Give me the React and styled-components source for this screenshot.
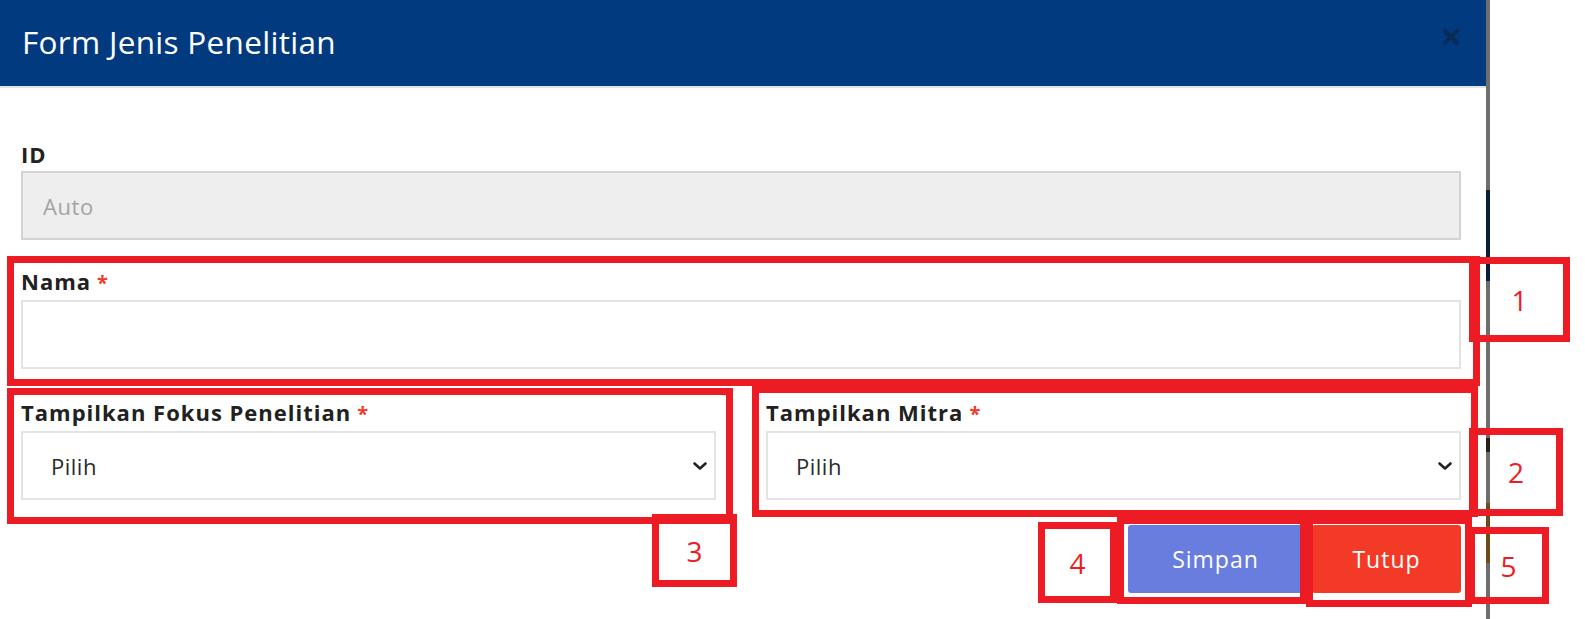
import React from "react";
import styled, { createGlobalStyle } from "styled-components";

const GlobalStyle = createGlobalStyle`
  html, body {
    margin: 0;
    padding: 0;
    background: #ffffff;
  }
  body {
    font-family: "Open Sans", "Noto Sans", sans-serif;
  }
`;

const Page = styled.div`
  position: relative;
  width: 1585px;
  height: 619px;
  overflow: hidden;
  display: flex;
  background: #ffffff;
`;

const Modal = styled.div`
  width: 1486px;
  flex-shrink: 0;
  display: flex;
  flex-direction: column;
  background: #ffffff;
`;

/* the dark page behind the modal peeks through as a thin strip */
const Backdrop = styled.div`
  width: 4px;
  flex-shrink: 0;
  background: linear-gradient(
    to bottom,
    #6d6d6d 0px,
    #6d6d6d 190px,
    #0b1c3d 190px,
    #0b1c3d 281px,
    #6d6d6d 281px,
    #6d6d6d 438px,
    #2a2016 438px,
    #2a2016 452px,
    #6d6d6d 452px,
    #6d6d6d 503px,
    #6b4a1c 503px,
    #6b4a1c 563px,
    #6d6d6d 563px
  );
`;

const Header = styled.div`
  height: 86px;
  background: #023a80;
  border-bottom: 2px solid #e4e4e4;
  display: flex;
  align-items: center;
  justify-content: space-between;
  padding: 0 25px 0 22px;
`;

const Title = styled.h4`
  margin: 0;
  color: #ffffff;
  font-size: 31.5px;
  font-weight: 400;
  letter-spacing: 0.3px;
  line-height: 1;
  padding-bottom: 3px;
`;

const CloseButton = styled.button`
  border: 0;
  background: transparent;
  padding: 0;
  display: flex;
  margin-top: -12px;
  cursor: pointer;
`;

const Body = styled.div`
  padding: 53px 25px 0 21px;
`;

const Group = styled.div`
  margin-bottom: ${(p) => p.$gap || 28}px;
`;

const Row = styled.div`
  display: grid;
  grid-template-columns: 1fr 1fr;
  column-gap: 50px;
`;

const Label = styled.label`
  display: block;
  font-size: 22px;
  line-height: 26px;
  font-weight: 700;
  letter-spacing: 1px;
  color: #212121;
  margin-bottom: 4px;
`;

const Required = styled.span`
  color: #f03a2a;
  margin-left: 6px;
  font-size: 20px;
`;

const Input = styled.input`
  box-sizing: border-box;
  display: block;
  width: 100%;
  height: 69px;
  padding: 0 20px;
  border: 2px solid ${(p) => (p.disabled ? "#d3d3d3" : "#e3e3e3")};
  background: ${(p) => (p.disabled ? "#eeeeee" : "#ffffff")};
  font-family: inherit;
  font-size: 22px;
  letter-spacing: 0.6px;
  color: #333333;
  outline: none;
  &::placeholder {
    color: #a3a3a3;
  }
`;

const SelectBox = styled.div`
  box-sizing: border-box;
  height: 69px;
  border: 2px solid #e4e4e4;
  background: #ffffff;
  display: flex;
  align-items: center;
  justify-content: space-between;
  padding: 0 6px 0 28px;
`;

const SelectText = styled.span`
  font-size: 22px;
  letter-spacing: 0.5px;
  color: #2b2b2b;
  font-weight: 400;
`;

const Actions = styled.div`
  display: flex;
  justify-content: flex-end;
  gap: 9px;
  margin-top: 25px;
`;

const Button = styled.button`
  width: ${(p) => p.$width}px;
  height: 68px;
  border: 0;
  border-radius: 3px;
  background: ${(p) => p.$bg};
  color: #ffffff;
  font-family: inherit;
  font-size: 23px;
  letter-spacing: 1px;
  font-weight: 400;
  cursor: pointer;
`;

const Mark = styled.div`
  position: absolute;
  box-sizing: border-box;
  left: ${(p) => p.$x}px;
  top: ${(p) => p.$y}px;
  width: ${(p) => p.$w}px;
  height: ${(p) => p.$h}px;
  border: 7px solid #ed1c24;
  display: flex;
  align-items: center;
  justify-content: center;
  color: #ed1c24;
  font-family: "Open Sans", "Liberation Sans", sans-serif;
  font-size: 28px;
  font-weight: 500;
  line-height: 1;
  pointer-events: none;
`;

const Chevron = () => (
  <svg width="16" height="10" viewBox="0 0 16 10">
    <polyline
      points="2.5,2.5 8,7.5 13.5,2.5"
      fill="none"
      stroke="#222"
      strokeWidth="2.6"
      strokeLinecap="round"
      strokeLinejoin="round"
    />
  </svg>
);

const Select = ({ value }) => (
  <SelectBox>
    <SelectText>{value}</SelectText>
    <Chevron />
  </SelectBox>
);

const marks = [
  { x: 7, y: 256, w: 1473, h: 130 },
  { x: 1469, y: 257, w: 101, h: 85, n: "1" },
  { x: 7, y: 388, w: 726, h: 136 },
  { x: 752, y: 386, w: 726, h: 131 },
  { x: 1469, y: 428, w: 94, h: 88, n: "2" },
  { x: 652, y: 514, w: 85, h: 73, n: "3" },
  { x: 1038, y: 522, w: 79, h: 81, n: "4" },
  { x: 1117, y: 517, w: 190, h: 87 },
  { x: 1306, y: 517, w: 166, h: 90 },
  { x: 1468, y: 527, w: 81, h: 77, n: "5" },
];

export default function App() {
  return (
    <>
      <GlobalStyle />
      <Page>
        <Modal>
          <Header>
            <Title>Form Jenis Penelitian</Title>
            <CloseButton aria-label="close">
              <svg width="20" height="18" viewBox="0 0 20 18">
                <path
                  d="M4 3 L16 15 M16 3 L4 15"
                  stroke="#0a2a58"
                  strokeWidth="4.5"
                  strokeLinecap="round"
                />
              </svg>
            </CloseButton>
          </Header>
          <Body>
            <Group>
              <Label>ID</Label>
              <Input disabled placeholder="Auto" />
            </Group>
            <Group $gap={30}>
              <Label>
                Nama<Required>*</Required>
              </Label>
              <Input />
            </Group>
            <Row>
              <div>
                <Label>
                  Tampilkan Fokus Penelitian<Required>*</Required>
                </Label>
                <Select value="Pilih" />
              </div>
              <div>
                <Label>
                  Tampilkan Mitra<Required>*</Required>
                </Label>
                <Select value="Pilih" />
              </div>
            </Row>
            <Actions>
              <Button $width={175} $bg="#697ddf">
                Simpan
              </Button>
              <Button $width={149} $bg="#f33a27">
                Tutup
              </Button>
            </Actions>
          </Body>
        </Modal>
        <Backdrop />
        {marks.map((m, i) => (
          <Mark key={i} $x={m.x} $y={m.y} $w={m.w} $h={m.h}>
            {m.n}
          </Mark>
        ))}
      </Page>
    </>
  );
}
